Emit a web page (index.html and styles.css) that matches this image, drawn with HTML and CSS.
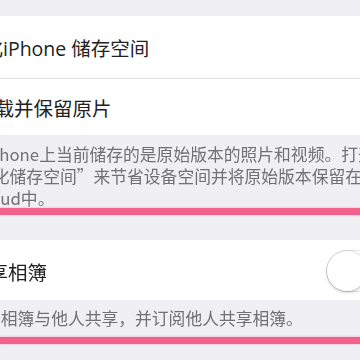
FILE: index.html
```html
<!DOCTYPE html>
<html lang="zh-CN">
  <head>
    <meta charset="UTF-8" />
    <meta name="viewport" content="width=device-width, initial-scale=1.0" />
    <title>照片设置</title>
    <link rel="stylesheet" href="styles.css">
  </head>
  <body>
    <div class="page">
      <div class="top-gap"></div>

      <!-- iCloud photo storage options -->
      <div class="cell cell-tall">
        <span class="title shift-optimize">优化iPhone 储存空间</span>
      </div>
      <div class="separator"></div>
      <div class="cell cell-short">
        <span class="title shift-download">下载并保留原片</span>
      </div>

      <div class="note note-first">
        <span class="note-line shift-line1">iPhone上当前储存的是原始版本的照片和视频。打开“</span>
        <span class="note-line shift-line2">优化储存空间”来节省设备空间并将原始版本保留在</span>
        <span class="note-line shift-line3">iCloud中。</span>
      </div>
      <div class="mark mark-first"></div>

      <!-- Shared albums -->
      <div class="cell cell-toggle">
        <span class="title shift-shared">共享相簿</span>
        <div class="switch">
          <div class="knob"></div>
        </div>
      </div>

      <div class="note note-second">
        <span class="note-line shift-line4">将相簿与他人共享，并订阅他人共享相簿。</span>
      </div>
      <div class="mark mark-second"></div>
    </div>
  </body>
</html>
```

FILE: styles.css
```css
body {
  margin: 0;
  padding: 0;
  background-color: #efeff4;
  font-family: "Open Sans", "Noto Sans CJK SC", sans-serif;
  overflow: hidden;
}

.page {
  width: 360px;
  height: 360px;
  overflow: hidden;
  filter: blur(0.4px);
}

.top-gap {
  height: 16px;
}

.cell {
  display: flex;
  align-items: center;
  background-color: #fff;
  overflow: hidden;
  white-space: nowrap;
}

.cell-tall {
  height: 62px;
}

.cell-short {
  height: 56px;
}

.cell-toggle {
  height: 60px;
  padding-top: 2px;
  box-sizing: border-box;
}

.title {
  flex: 1;
  font-size: 19.5px;
  color: #222;
}

.shift-optimize {
  margin-left: -36px;
}

.shift-download {
  margin-left: -25px;
}

.shift-shared {
  margin-left: -31px;
}

.separator {
  height: 1px;
  background-color: #e0e0e5;
}

.note {
  font-family: "Noto Sans CJK SC", sans-serif;
  font-size: 16.8px;
  line-height: 22px;
  color: #707075;
  white-space: nowrap;
  overflow: hidden;
}

.note-line {
  display: block;
}

.note-first {
  padding-top: 8px;
}

.note-second {
  padding-top: 7px;
}

.shift-line1 {
  margin-left: -16px;
}

.shift-line2 {
  margin-left: -24px;
}

.shift-line3 {
  margin-left: -30px;
}

.shift-line4 {
  margin-left: -16px;
}

/* pink underline marks */
.mark {
  height: 7px;
  background-color: #f3628c;
  box-shadow: 0 0 2px rgba(243, 98, 140, 0.6);
}

.mark-first {
  margin-top: -1px;
  margin-bottom: 25px;
}

.mark-second {
  margin-top: 8px;
}

.switch {
  flex: none;
  width: 66px;
  height: 40px;
  margin-right: -34px;
  border: 1.5px solid #e4e4e9;
  border-radius: 21px;
  background-color: #fff;
  display: flex;
  align-items: center;
}

.knob {
  width: 40px;
  height: 40px;
  border-radius: 50%;
  background-color: #fff;
  box-shadow: 0 2px 3px rgba(0, 0, 0, 0.15), 0 0 0 1px rgba(0, 0, 0, 0.1);
}
```
